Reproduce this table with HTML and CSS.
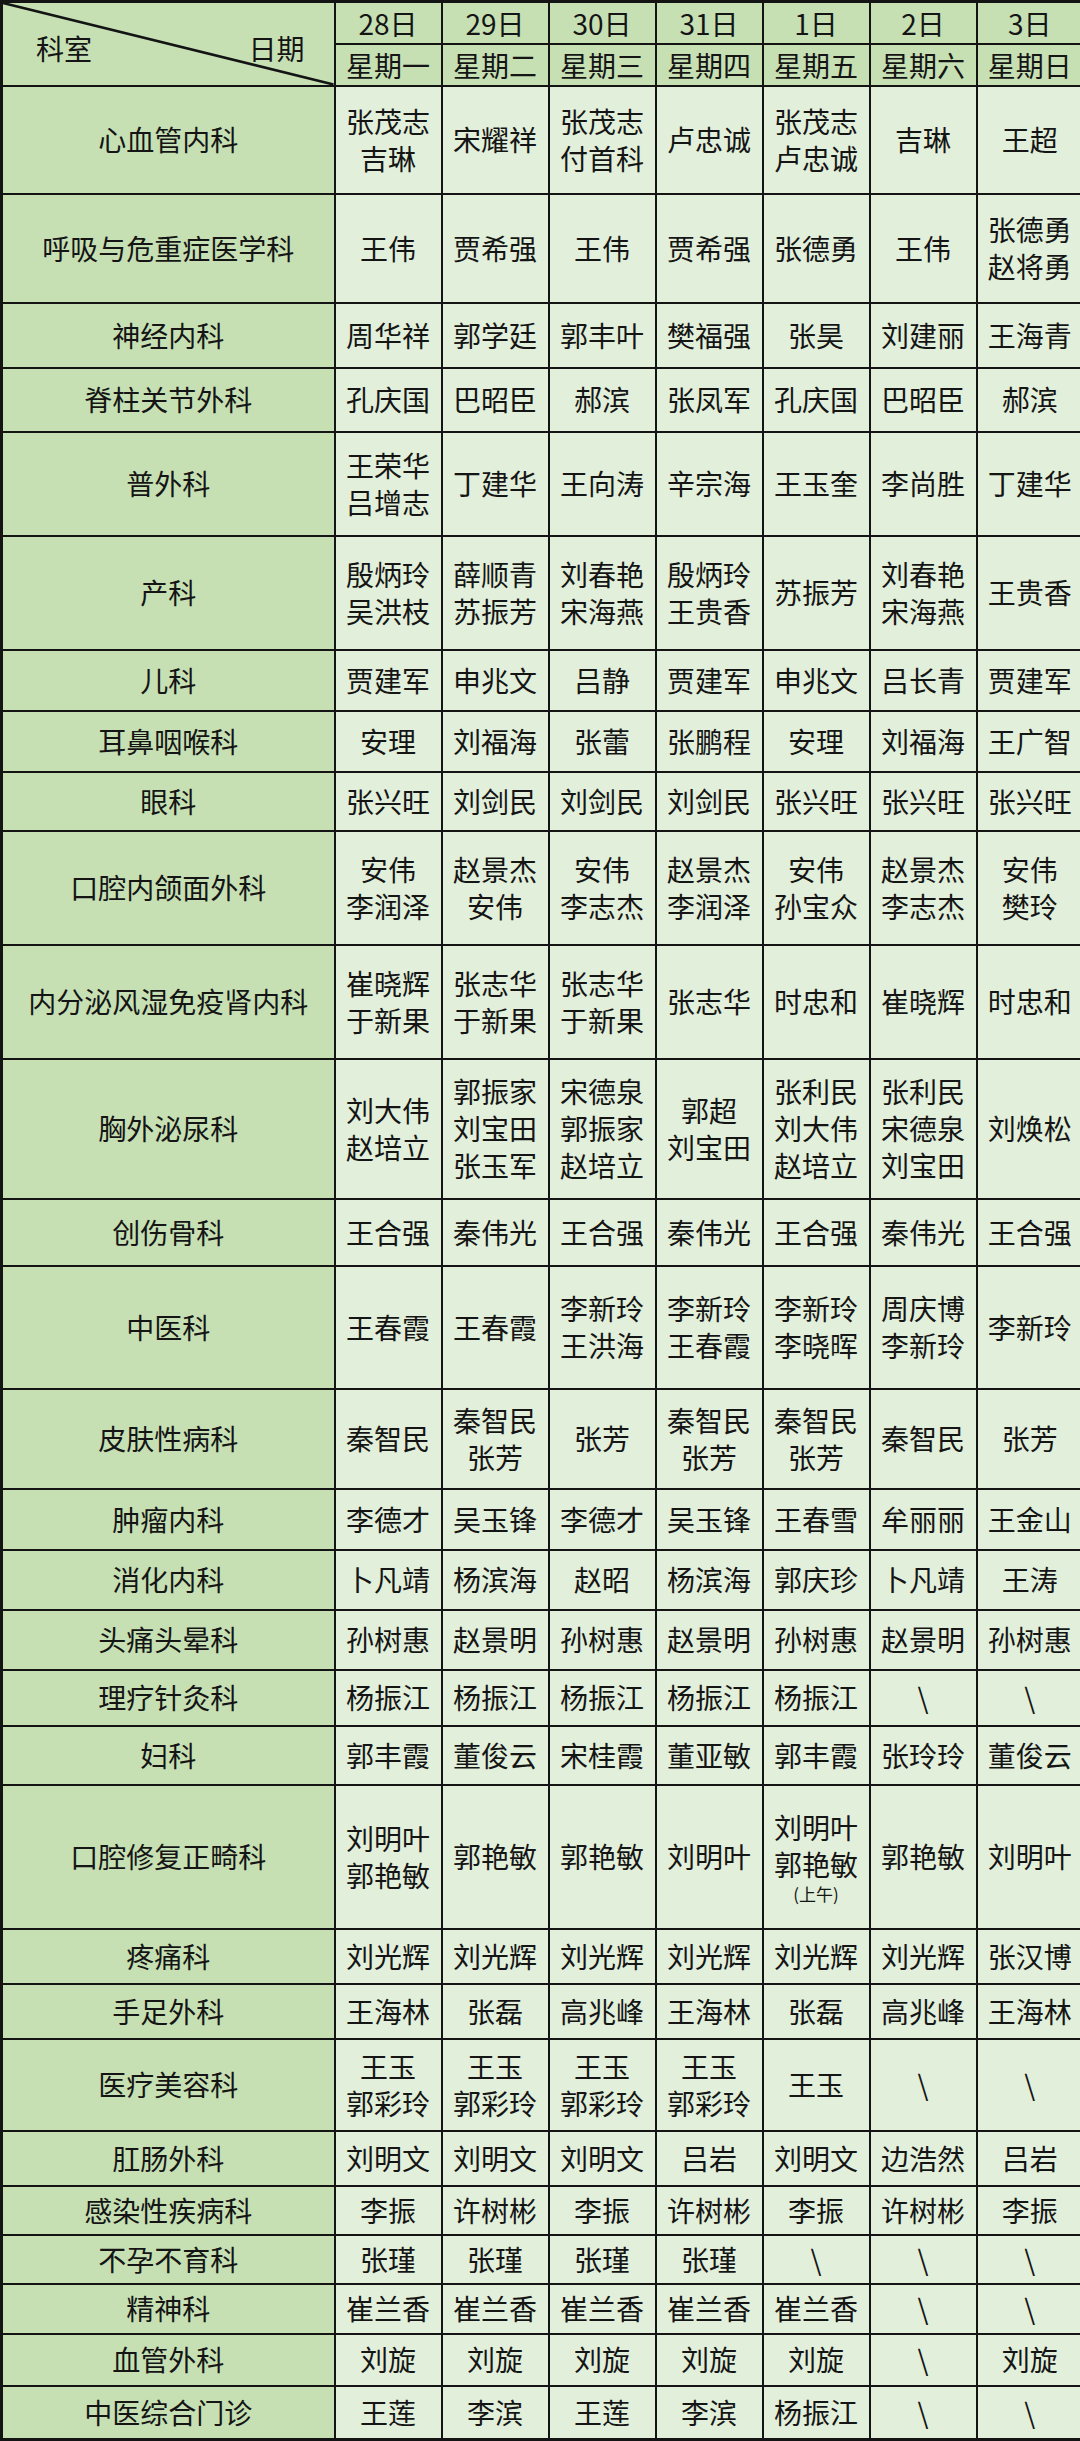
FILE: index.html
```html
<!DOCTYPE html>
<html lang="zh-CN">
<head>
<meta charset="utf-8">
<title>门诊排班表</title>
<link rel="stylesheet" href="styles.css">
</head>
<body>
<table class="schedule">
<colgroup>
<col class="c-dept">
<col class="c-day"><col class="c-day"><col class="c-day"><col class="c-day"><col class="c-day"><col class="c-day"><col class="c-day">
</colgroup>
<thead>
<tr class="h42">
<th class="corner" rowspan="2">
<svg class="diag" viewBox="0 0 100 100" preserveAspectRatio="none"><line x1="0" y1="0" x2="100" y2="100" vector-effect="non-scaling-stroke"/></svg>
<div class="corner-labels"><span>科室</span><span>日期</span></div>
</th>
<th>28日</th><th>29日</th><th>30日</th><th>31日</th><th>1日</th><th>2日</th><th>3日</th>
</tr>
<tr class="h42">
<th>星期一</th><th>星期二</th><th>星期三</th><th>星期四</th><th>星期五</th><th>星期六</th><th>星期日</th>
</tr>
</thead>
<tbody>
<tr class="h108"><th>心血管内科</th><td>张茂志<br>吉琳</td><td>宋耀祥</td><td>张茂志<br>付首科</td><td>卢忠诚</td><td>张茂志<br>卢忠诚</td><td>吉琳</td><td>王超</td></tr>
<tr class="h109"><th>呼吸与危重症医学科</th><td>王伟</td><td>贾希强</td><td>王伟</td><td>贾希强</td><td>张德勇</td><td>王伟</td><td>张德勇<br>赵将勇</td></tr>
<tr class="h65"><th>神经内科</th><td>周华祥</td><td>郭学廷</td><td>郭丰叶</td><td>樊福强</td><td>张昊</td><td>刘建丽</td><td>王海青</td></tr>
<tr class="h64"><th>脊柱关节外科</th><td>孔庆国</td><td>巴昭臣</td><td>郝滨</td><td>张凤军</td><td>孔庆国</td><td>巴昭臣</td><td>郝滨</td></tr>
<tr class="h104"><th>普外科</th><td>王荣华<br>吕增志</td><td>丁建华</td><td>王向涛</td><td>辛宗海</td><td>王玉奎</td><td>李尚胜</td><td>丁建华</td></tr>
<tr class="h114"><th>产科</th><td>殷炳玲<br>吴洪枝</td><td>薛顺青<br>苏振芳</td><td>刘春艳<br>宋海燕</td><td>殷炳玲<br>王贵香</td><td>苏振芳</td><td>刘春艳<br>宋海燕</td><td>王贵香</td></tr>
<tr class="h61"><th>儿科</th><td>贾建军</td><td>申兆文</td><td>吕静</td><td>贾建军</td><td>申兆文</td><td>吕长青</td><td>贾建军</td></tr>
<tr class="h61"><th>耳鼻咽喉科</th><td>安理</td><td>刘福海</td><td>张蕾</td><td>张鹏程</td><td>安理</td><td>刘福海</td><td>王广智</td></tr>
<tr class="h59"><th>眼科</th><td>张兴旺</td><td>刘剑民</td><td>刘剑民</td><td>刘剑民</td><td>张兴旺</td><td>张兴旺</td><td>张兴旺</td></tr>
<tr class="h114"><th>口腔内颌面外科</th><td>安伟<br>李润泽</td><td>赵景杰<br>安伟</td><td>安伟<br>李志杰</td><td>赵景杰<br>李润泽</td><td>安伟<br>孙宝众</td><td>赵景杰<br>李志杰</td><td>安伟<br>樊玲</td></tr>
<tr class="h114"><th>内分泌风湿免疫肾内科</th><td>崔晓辉<br>于新果</td><td>张志华<br>于新果</td><td>张志华<br>于新果</td><td>张志华</td><td>时忠和</td><td>崔晓辉</td><td>时忠和</td></tr>
<tr class="h140"><th>胸外泌尿科</th><td>刘大伟<br>赵培立</td><td>郭振家<br>刘宝田<br>张玉军</td><td>宋德泉<br>郭振家<br>赵培立</td><td>郭超<br>刘宝田</td><td>张利民<br>刘大伟<br>赵培立</td><td>张利民<br>宋德泉<br>刘宝田</td><td>刘焕松</td></tr>
<tr class="h67"><th>创伤骨科</th><td>王合强</td><td>秦伟光</td><td>王合强</td><td>秦伟光</td><td>王合强</td><td>秦伟光</td><td>王合强</td></tr>
<tr class="h123"><th>中医科</th><td>王春霞</td><td>王春霞</td><td>李新玲<br>王洪海</td><td>李新玲<br>王春霞</td><td>李新玲<br>李晓晖</td><td>周庆博<br>李新玲</td><td>李新玲</td></tr>
<tr class="h100"><th>皮肤性病科</th><td>秦智民</td><td>秦智民<br>张芳</td><td>张芳</td><td>秦智民<br>张芳</td><td>秦智民<br>张芳</td><td>秦智民</td><td>张芳</td></tr>
<tr class="h61"><th>肿瘤内科</th><td>李德才</td><td>吴玉锋</td><td>李德才</td><td>吴玉锋</td><td>王春雪</td><td>牟丽丽</td><td>王金山</td></tr>
<tr class="h60"><th>消化内科</th><td>卜凡靖</td><td>杨滨海</td><td>赵昭</td><td>杨滨海</td><td>郭庆珍</td><td>卜凡靖</td><td>王涛</td></tr>
<tr class="h60"><th>头痛头晕科</th><td>孙树惠</td><td>赵景明</td><td>孙树惠</td><td>赵景明</td><td>孙树惠</td><td>赵景明</td><td>孙树惠</td></tr>
<tr class="h56"><th>理疗针灸科</th><td>杨振江</td><td>杨振江</td><td>杨振江</td><td>杨振江</td><td>杨振江</td><td>\</td><td>\</td></tr>
<tr class="h59"><th>妇科</th><td>郭丰霞</td><td>董俊云</td><td>宋桂霞</td><td>董亚敏</td><td>郭丰霞</td><td>张玲玲</td><td>董俊云</td></tr>
<tr class="h144"><th>口腔修复正畸科</th><td>刘明叶<br>郭艳敏</td><td>郭艳敏</td><td>郭艳敏</td><td>刘明叶</td><td>刘明叶<br>郭艳敏<span class="note">(上午)</span></td><td>郭艳敏</td><td>刘明叶</td></tr>
<tr class="h55"><th>疼痛科</th><td>刘光辉</td><td>刘光辉</td><td>刘光辉</td><td>刘光辉</td><td>刘光辉</td><td>刘光辉</td><td>张汉博</td></tr>
<tr class="h55"><th>手足外科</th><td>王海林</td><td>张磊</td><td>高兆峰</td><td>王海林</td><td>张磊</td><td>高兆峰</td><td>王海林</td></tr>
<tr class="h92"><th>医疗美容科</th><td>王玉<br>郭彩玲</td><td>王玉<br>郭彩玲</td><td>王玉<br>郭彩玲</td><td>王玉<br>郭彩玲</td><td>王玉</td><td>\</td><td>\</td></tr>
<tr class="h55"><th>肛肠外科</th><td>刘明文</td><td>刘明文</td><td>刘明文</td><td>吕岩</td><td>刘明文</td><td>边浩然</td><td>吕岩</td></tr>
<tr class="h49"><th>感染性疾病科</th><td>李振</td><td>许树彬</td><td>李振</td><td>许树彬</td><td>李振</td><td>许树彬</td><td>李振</td></tr>
<tr class="h49"><th>不孕不育科</th><td>张瑾</td><td>张瑾</td><td>张瑾</td><td>张瑾</td><td>\</td><td>\</td><td>\</td></tr>
<tr class="h50"><th>精神科</th><td>崔兰香</td><td>崔兰香</td><td>崔兰香</td><td>崔兰香</td><td>崔兰香</td><td>\</td><td>\</td></tr>
<tr class="h52"><th>血管外科</th><td>刘旋</td><td>刘旋</td><td>刘旋</td><td>刘旋</td><td>刘旋</td><td>\</td><td>刘旋</td></tr>
<tr class="h54"><th>中医综合门诊</th><td>王莲</td><td>李滨</td><td>王莲</td><td>李滨</td><td>杨振江</td><td>\</td><td>\</td></tr>
</tbody>
</table>
</body>
</html>
```

FILE: styles.css
```css
html, body {
  margin: 0;
  padding: 0;
  background: #ffffff;
}

.schedule {
  width: 1080px;
  table-layout: fixed;
  border-collapse: collapse;
  border: 3px solid #141414;
  font-family: "Noto Sans CJK SC", "Noto Sans", sans-serif;
  font-size: 28px;
  line-height: 37px;
  color: #151515;
}

.c-dept { width: 333px; }
.c-day { width: 107px; }

.schedule th,
.schedule td {
  border: 2px solid #141414;
  padding: 0;
  text-align: center;
  vertical-align: middle;
  font-weight: normal;
  white-space: nowrap;
}

.schedule thead th { background: #c6e0b4; line-height: 36px; }
.schedule tbody th { background: #c6e0b4; }
.schedule tbody td { background: #e2efda; }

.corner {
  position: relative;
}

.diag {
  position: absolute;
  left: 0;
  top: 0;
  width: 100%;
  height: 100%;
  overflow: visible;
}

.diag line {
  stroke: #141414;
  stroke-width: 2.5;
}

.corner-labels {
  display: flex;
  justify-content: space-between;
  padding: 8px 29px 0 33px;
}

.note {
  display: block;
  font-size: 17px;
  line-height: 22px;
}

.h42 { height: 42px; }
.h49 { height: 49px; }
.h50 { height: 50px; }
.h52 { height: 52px; }
.h54 { height: 54px; }
.h55 { height: 55px; }
.h56 { height: 56px; }
.h59 { height: 59px; }
.h60 { height: 60px; }
.h61 { height: 61px; }
.h64 { height: 64px; }
.h65 { height: 65px; }
.h67 { height: 67px; }
.h92 { height: 92px; }
.h100 { height: 100px; }
.h104 { height: 104px; }
.h108 { height: 108px; }
.h109 { height: 109px; }
.h114 { height: 114px; }
.h123 { height: 123px; }
.h140 { height: 140px; }
.h144 { height: 144px; }
```
